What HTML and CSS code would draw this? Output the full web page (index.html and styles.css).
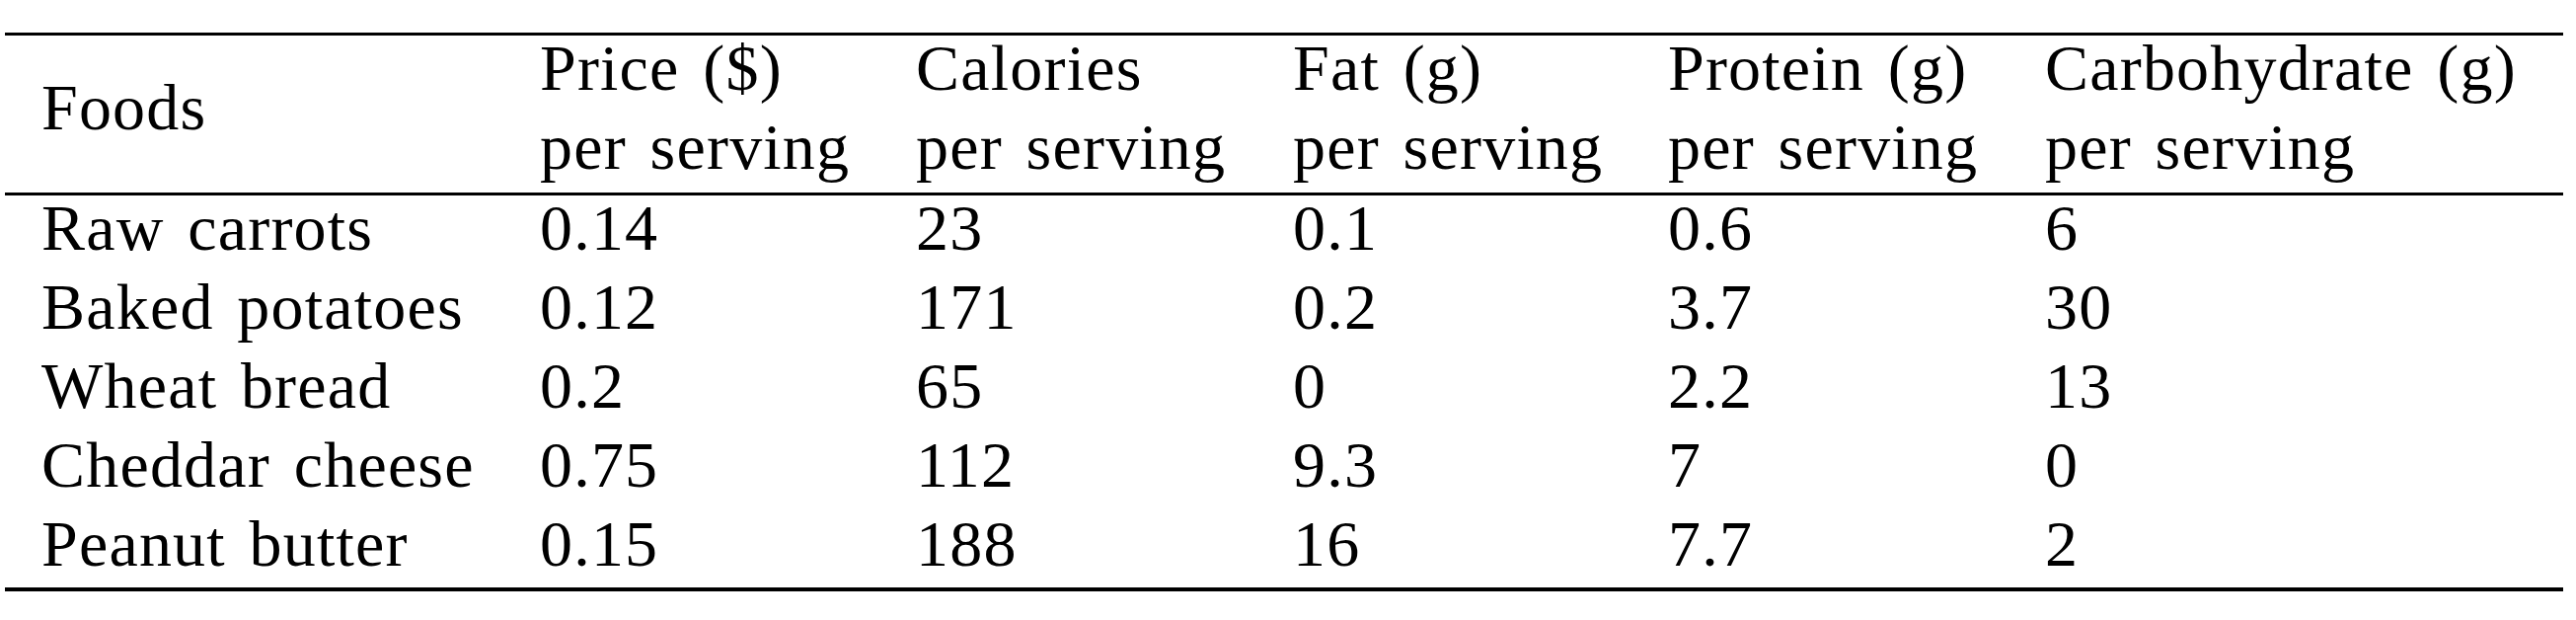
FILE: index.html
```html
<!DOCTYPE html>
<html lang="en">
<head>
<meta charset="utf-8">
<title>Foods nutrition table</title>
<link rel="stylesheet" href="styles.css">
</head>
<body>
<table class="diet">
  <colgroup>
    <col class="c-food">
    <col class="c-price">
    <col class="c-cal">
    <col class="c-fat">
    <col class="c-prot">
    <col class="c-carb">
  </colgroup>
  <thead>
    <tr>
      <th class="foods">Foods</th>
      <th><span class="l">Price ($)</span><span class="l">per serving</span></th>
      <th><span class="l">Calories</span><span class="l">per serving</span></th>
      <th><span class="l">Fat (g)</span><span class="l">per serving</span></th>
      <th><span class="l">Protein (g)</span><span class="l">per serving</span></th>
      <th><span class="l">Carbohydrate (g)</span><span class="l">per serving</span></th>
    </tr>
  </thead>
  <tbody>
    <tr><td>Raw carrots</td><td>0.14</td><td>23</td><td>0.1</td><td>0.6</td><td>6</td></tr>
    <tr><td>Baked potatoes</td><td>0.12</td><td>171</td><td>0.2</td><td>3.7</td><td>30</td></tr>
    <tr><td>Wheat bread</td><td>0.2</td><td>65</td><td>0</td><td>2.2</td><td>13</td></tr>
    <tr><td>Cheddar cheese</td><td>0.75</td><td>112</td><td>9.3</td><td>7</td><td>0</td></tr>
    <tr><td>Peanut butter</td><td>0.15</td><td>188</td><td>16</td><td>7.7</td><td>2</td></tr>
  </tbody>
</table>
</body>
</html>
```

FILE: styles.css
```css
html, body {
  margin: 0;
  padding: 0;
  background: #ffffff;
}

body {
  padding: 33px 0 0 5px;
  font-family: "Liberation Serif", "Times New Roman", serif;
  font-size: 66px;
  color: #000000;
  letter-spacing: 1.2px;
  word-spacing: 6px;
}

.diet {
  border-collapse: separate;
  border-spacing: 0;
  table-layout: fixed;
  width: 2592px;
}

.c-food { width: 505px; }
.c-price { width: 381px; }
.c-cal { width: 382px; }
.c-fat { width: 380px; }
.c-prot { width: 382px; }
.c-carb { width: 562px; }

.diet th,
.diet td {
  text-align: left;
  font-weight: normal;
  white-space: nowrap;
  line-height: 66px;
  padding: 0 0 0 37px;
  vertical-align: top;
}

.diet th {
  border-top: 3px solid #000;
  border-bottom: 3px solid #000;
  padding-bottom: 13px;
}

.diet th .l {
  display: block;
}

.diet th .l + .l {
  margin-top: 14px;
}

.diet th.foods {
  padding-top: 40px;
}

.diet td {
  padding-bottom: 14px;
}

.diet tbody tr:last-child td {
  padding-bottom: 11px;
  border-bottom: 4px solid #000;
}
```
